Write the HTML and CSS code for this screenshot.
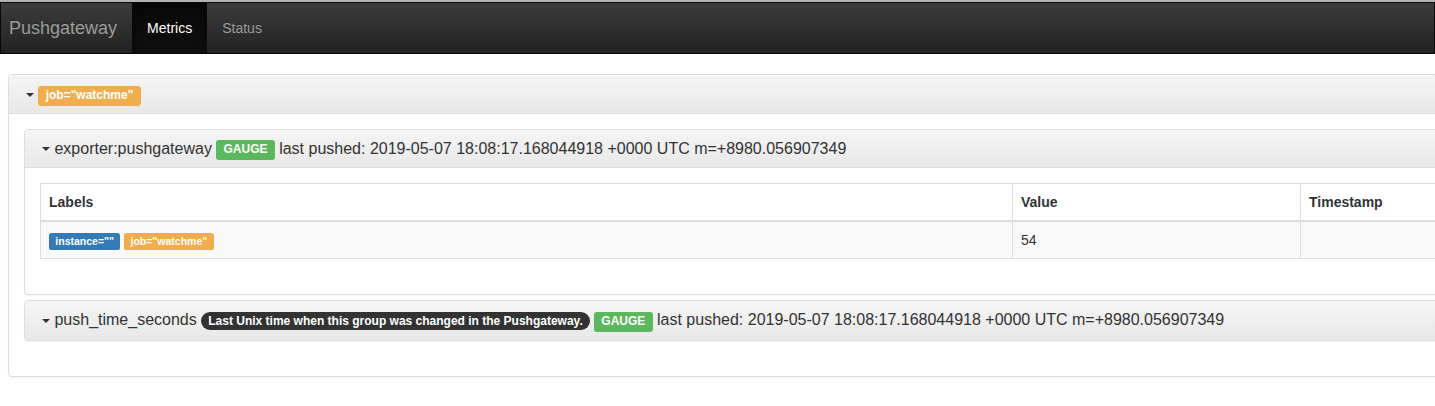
FILE: index.html
```html
<!DOCTYPE html>
<html lang="en">
<head>
<meta charset="utf-8">
<title>Pushgateway</title>
<link rel="stylesheet" href="styles.css">
</head>
<body>
<nav class="navbar">
  <a class="brand" href="#">Pushgateway</a>
  <ul class="nav">
    <li class="active"><a href="#">Metrics</a></li>
    <li><a href="#">Status</a></li>
  </ul>
</nav>
<main class="page">
  <div class="panel">
    <div class="panel-heading">
      <h4 class="panel-title"><span class="caret"></span> <span class="label label-warning">job="watchme"</span></h4>
    </div>
    <div class="panel-body">
      <div class="panel-group">
        <div class="panel">
          <div class="panel-heading">
            <h4 class="panel-title"><span class="caret"></span> exporter:pushgateway <span class="label label-success">GAUGE</span> last pushed: 2019-05-07 18:08:17.168044918 +0000 UTC m=+8980.056907349</h4>
          </div>
          <div class="panel-body">
            <table class="table">
              <thead>
                <tr><th class="col-labels">Labels</th><th class="col-value">Value</th><th class="col-ts">Timestamp</th></tr>
              </thead>
              <tbody>
                <tr><td><span class="label label-primary">instance=""</span> <span class="label label-warning">job="watchme"</span></td><td>54</td><td></td></tr>
              </tbody>
            </table>
          </div>
        </div>
        <div class="panel">
          <div class="panel-heading">
            <h4 class="panel-title"><span class="caret"></span> push_time_seconds <span class="badge">Last Unix time when this group was changed in the Pushgateway.</span> <span class="label label-success">GAUGE</span> last pushed: 2019-05-07 18:08:17.168044918 +0000 UTC m=+8980.056907349</h4>
          </div>
        </div>
      </div>
    </div>
  </div>
</main>
</body>
</html>
```

FILE: styles.css
```css
html {
  overflow: hidden;
}
* {
  box-sizing: border-box;
}
body {
  margin: 0;
  font-family: "Liberation Sans", Arial, sans-serif;
  font-size: 14px;
  line-height: 1.42857143;
  color: #333;
  background: #fff;
  border-top: 2px solid #b4b4b4;
}
a {
  text-decoration: none;
}

/* navbar */
.navbar {
  display: flex;
  height: 52px;
  margin-bottom: 20px;
  border: 1px solid #080808;
  background-image: linear-gradient(to bottom, #3c3c3c 0%, #222 100%);
}
.brand {
  display: block;
  height: 50px;
  padding: 15px 15px 15px 8px;
  font-size: 18px;
  line-height: 20px;
  color: #9d9d9d;
  text-shadow: 0 -1px 0 rgba(0, 0, 0, .25);
}
.nav {
  display: flex;
  margin: 0;
  padding: 0;
  list-style: none;
}
.nav a {
  display: block;
  padding: 15px;
  line-height: 20px;
  color: #9d9d9d;
  text-shadow: 0 -1px 0 rgba(0, 0, 0, .25);
}
.nav .active a {
  color: #fff;
  background-image: linear-gradient(to bottom, #080808 0%, #0f0f0f 100%);
  box-shadow: inset 0 3px 9px rgba(0, 0, 0, .25);
}

/* page */
.page {
  width: 1600px;
  padding: 0 8px;
}
.panel {
  margin-bottom: 20px;
  background: #fff;
  border: 1px solid #ddd;
  border-radius: 4px;
  box-shadow: 0 1px 2px rgba(0, 0, 0, .05);
}
.panel-heading {
  padding: 10px 15px;
  border-bottom: 1px solid #ddd;
  border-radius: 3px 3px 0 0;
  background-image: linear-gradient(to bottom, #f5f5f5 0%, #e8e8e8 100%);
  color: #333;
}
.panel-group .panel > .panel-heading:last-child {
  border-bottom: 0;
  border-radius: 3px;
}
.panel-title {
  margin: 0;
  font-size: 16px;
  font-weight: 400;
  line-height: 1.1;
  color: inherit;
}
.panel-body {
  padding: 15px;
}
.panel-group {
  margin-bottom: 20px;
}
.panel-group .panel {
  margin-bottom: 0;
}
.panel-group .panel + .panel {
  margin-top: 5px;
}

.caret {
  display: inline-block;
  width: 0;
  height: 0;
  margin-left: 2px;
  vertical-align: middle;
  border-top: 4px solid #333;
  border-right: 4px solid transparent;
  border-left: 4px solid transparent;
}

.label {
  display: inline;
  padding: .2em .6em .3em;
  font-size: 75%;
  font-weight: 700;
  line-height: 1;
  color: #fff;
  text-align: center;
  white-space: nowrap;
  vertical-align: baseline;
  border-radius: .25em;
}
.label-warning { background-color: #f0ad4e; }
.label-success { background-color: #5cb85c; }
.label-primary { background-color: #337ab7; }

.badge {
  display: inline-block;
  min-width: 10px;
  padding: 3px 7px;
  font-size: 12px;
  font-weight: 700;
  line-height: 1;
  color: #fff;
  text-align: center;
  white-space: nowrap;
  vertical-align: middle;
  background-color: #333;
  border-radius: 10px;
}

/* table */
.table {
  width: 100%;
  margin-bottom: 20px;
  border-collapse: collapse;
  border-spacing: 0;
  table-layout: fixed;
  border: 1px solid #ddd;
}
.table th,
.table td {
  padding: 8px;
  line-height: 1.42857143;
  text-align: left;
  vertical-align: top;
  border: 1px solid #ddd;
}
.table thead th {
  vertical-align: bottom;
  border-bottom-width: 2px;
  font-weight: 700;
}
.table tbody tr:nth-of-type(odd) {
  background-color: #f9f9f9;
}
.col-labels { width: 972px; }
.col-value { width: 288px; }
```
